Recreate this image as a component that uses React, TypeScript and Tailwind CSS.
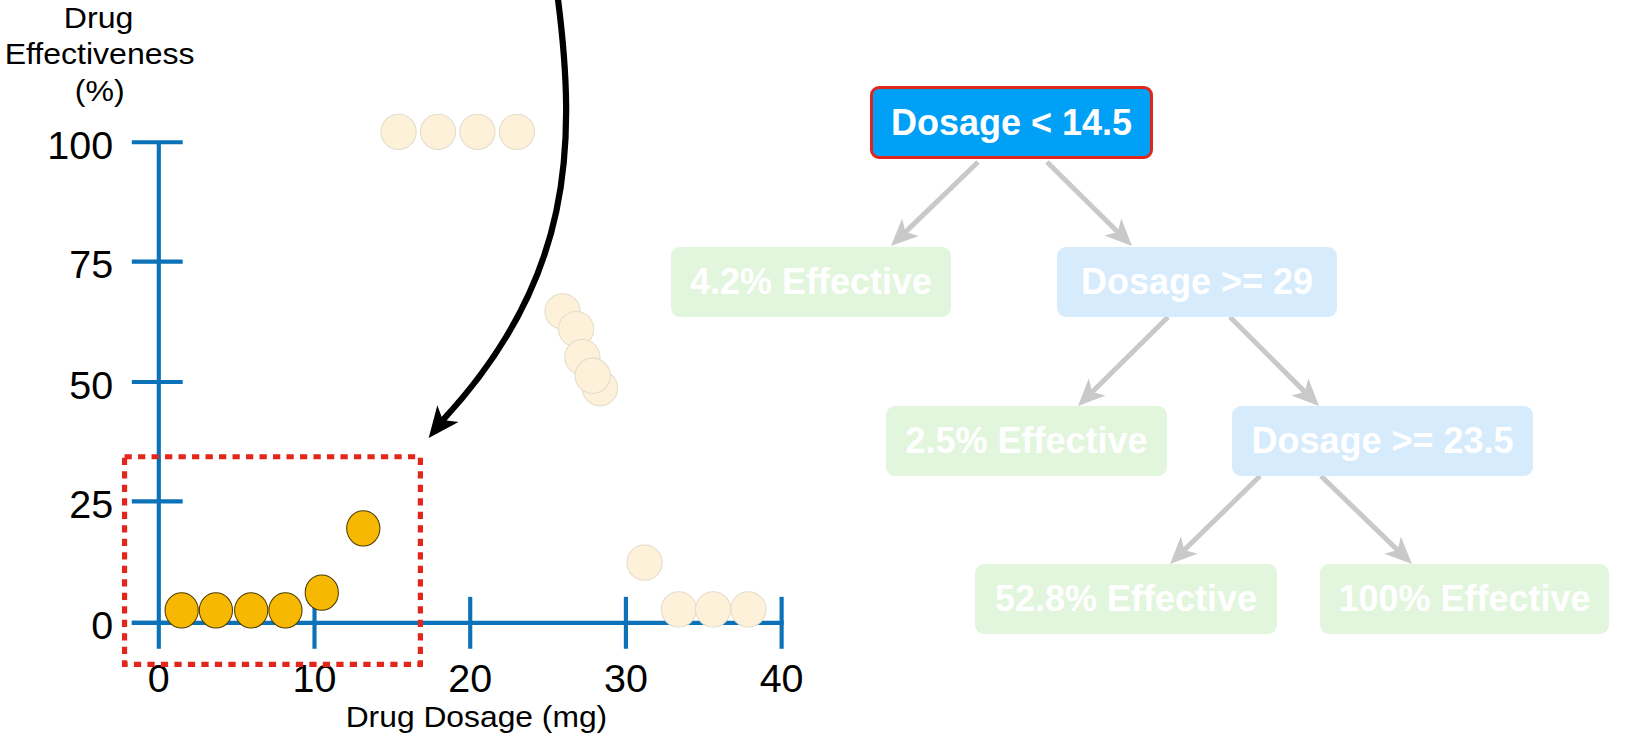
import React from "react";

const AXIS = "#0b72b9";
const FONT = '"Liberation Sans", Arial, sans-serif';

type Pt = [number, number];

// filled arrow head with a small notch, Keynote style
function headPoints(from: Pt, to: Pt, len: number, half: number, notch: number) {
  const dx = to[0] - from[0];
  const dy = to[1] - from[1];
  const d = Math.hypot(dx, dy);
  const ux = dx / d;
  const uy = dy / d;
  const nx = -uy;
  const ny = ux;
  const bx = to[0] - ux * len;
  const by = to[1] - uy * len;
  const pts: Pt[] = [
    to,
    [bx + nx * half, by + ny * half],
    [to[0] - ux * (len - notch), to[1] - uy * (len - notch)],
    [bx - nx * half, by - ny * half],
  ];
  return {
    points: pts.map((p) => p.join(",")).join(" "),
    end: pts[2],
  };
}

const yTicks = [
  { label: "100", y: 137 },
  { label: "75", y: 252 },
  { label: "50", y: 368 },
  { label: "25", y: 483 },
  { label: "0", y: 600 },
];

const xTicks = [
  { label: "0", x: 153 },
  { label: "10", x: 303 },
  { label: "20", x: 453 },
  { label: "30", x: 603 },
  { label: "40", x: 753 },
];

const active: Pt[] = [
  [175, 588],
  [208, 588],
  [242, 588],
  [275, 588],
  [310, 571],
  [350, 509],
];

const faded: Pt[] = [
  [384, 127],
  [422, 127],
  [460, 127],
  [498, 127],
  [542, 300],
  [555, 317],
  [561, 344],
  [578, 374],
  [571, 362],
  [621, 542],
  [654, 587],
  [687, 587],
  [721, 587],
];

function Chart() {
  const head = headPoints([446, 380], [413, 422], 30, 13, 8);
  return (
    <svg width={640} height={740} overflow="visible" className="shrink-0">
      <g transform="scale(1.038)">
        <g fontFamily={FONT} fill="#000">
          <text x={95} y={27} fontSize={28} textAnchor="middle" textLength={67} lengthAdjust="spacingAndGlyphs">
            Drug
          </text>
          <text x={96} y={62} fontSize={28} textAnchor="middle" textLength={183} lengthAdjust="spacingAndGlyphs">
            Effectiveness
          </text>
          <text x={96} y={97} fontSize={28} textAnchor="middle" textLength={48} lengthAdjust="spacingAndGlyphs">
            (%)
          </text>
          {yTicks.map((t) => (
            <text key={t.label} x={109} y={t.y + 16} fontSize={38} textAnchor="end">
              {t.label}
            </text>
          ))}
          {xTicks.map((t) => (
            <text key={t.label} x={t.x} y={667} fontSize={38} textAnchor="middle">
              {t.label}
            </text>
          ))}
          <text x={459} y={700} fontSize={28} textAnchor="middle" textLength={252} lengthAdjust="spacingAndGlyphs">
            Drug Dosage (mg)
          </text>
        </g>

        <g stroke={AXIS} strokeWidth={4}>
          <line x1={153} y1={137} x2={153} y2={625} />
          <line x1={127} y1={600} x2={755} y2={600} />
          {yTicks.map((t) => (
            <line key={t.label} x1={127} y1={t.y} x2={176} y2={t.y} />
          ))}
          {xTicks.slice(1).map((t) => (
            <line key={t.label} x1={t.x} y1={575} x2={t.x} y2={625} />
          ))}
        </g>

        {faded.map(([x, y], i) => (
          <circle key={i} cx={x} cy={y} r={17} fill="#fdf1d9" stroke="#e4dccb" strokeWidth={1} />
        ))}
        {active.map(([x, y], i) => (
          <ellipse key={i} cx={x} cy={y} rx={16} ry={17} fill="#f6b800" stroke="#4d3a00" strokeWidth={1} />
        ))}

        <rect
          x={120}
          y={440}
          width={285}
          height={200}
          fill="none"
          stroke="#e2261c"
          strokeWidth={5}
          strokeDasharray="7 6"
        />

        <path
          d={`M 537 -5 C 556 140, 552 270, ${head.end[0]} ${head.end[1]}`}
          fill="none"
          stroke="#000"
          strokeWidth={6}
        />
        <polygon points={head.points} fill="#000" />
      </g>
    </svg>
  );
}

function TreeNode({ label, className }: { label: string; className: string }) {
  return (
    <div
      className={`absolute flex items-center justify-center rounded-[9px] font-['Liberation_Sans',Arial,sans-serif] text-[36px] font-bold text-white ${className}`}
    >
      {label}
    </div>
  );
}

const edges: [Pt, Pt][] = [
  [[338, 162], [251, 246]],
  [[407, 162], [492, 246]],
  [[528, 317], [438, 406]],
  [[590, 317], [679, 406]],
  [[620, 476], [530, 564]],
  [[681, 476], [772, 564]],
];

function Tree() {
  return (
    <div className="relative h-[740px] flex-1">
      <svg className="absolute inset-0" width={986} height={740}>
        {edges.map(([a, b], i) => {
          const h = headPoints(a, b, 27, 12, 7);
          return (
            <g key={i} fill="#c9c9c9" stroke="#c9c9c9">
              <line x1={a[0]} y1={a[1]} x2={h.end[0]} y2={h.end[1]} strokeWidth={5} />
              <polygon points={h.points} stroke="none" />
            </g>
          );
        })}
      </svg>
      <TreeNode
        label="Dosage < 14.5"
        className="left-[230px] top-[86px] h-[73px] w-[283px] border-[3px] border-[#e0251d] bg-[#00a0f6]"
      />
      <TreeNode label="4.2% Effective" className="left-[31px] top-[247px] h-[70px] w-[280px] bg-[#e2f6dd]" />
      <TreeNode label="Dosage >= 29" className="left-[417px] top-[247px] h-[70px] w-[280px] bg-[#d6ebfc]" />
      <TreeNode label="2.5% Effective" className="left-[246px] top-[406px] h-[70px] w-[281px] bg-[#e2f6dd]" />
      <TreeNode label="Dosage >= 23.5" className="left-[592px] top-[406px] h-[70px] w-[301px] bg-[#d6ebfc]" />
      <TreeNode label="52.8% Effective" className="left-[335px] top-[564px] h-[70px] w-[302px] bg-[#e2f6dd]" />
      <TreeNode label="100% Effective" className="left-[680px] top-[564px] h-[70px] w-[289px] bg-[#e2f6dd]" />
    </div>
  );
}

export default function App() {
  return (
    <div className="flex h-[740px] w-[1626px] overflow-hidden bg-white">
      <Chart />
      <Tree />
    </div>
  );
}
